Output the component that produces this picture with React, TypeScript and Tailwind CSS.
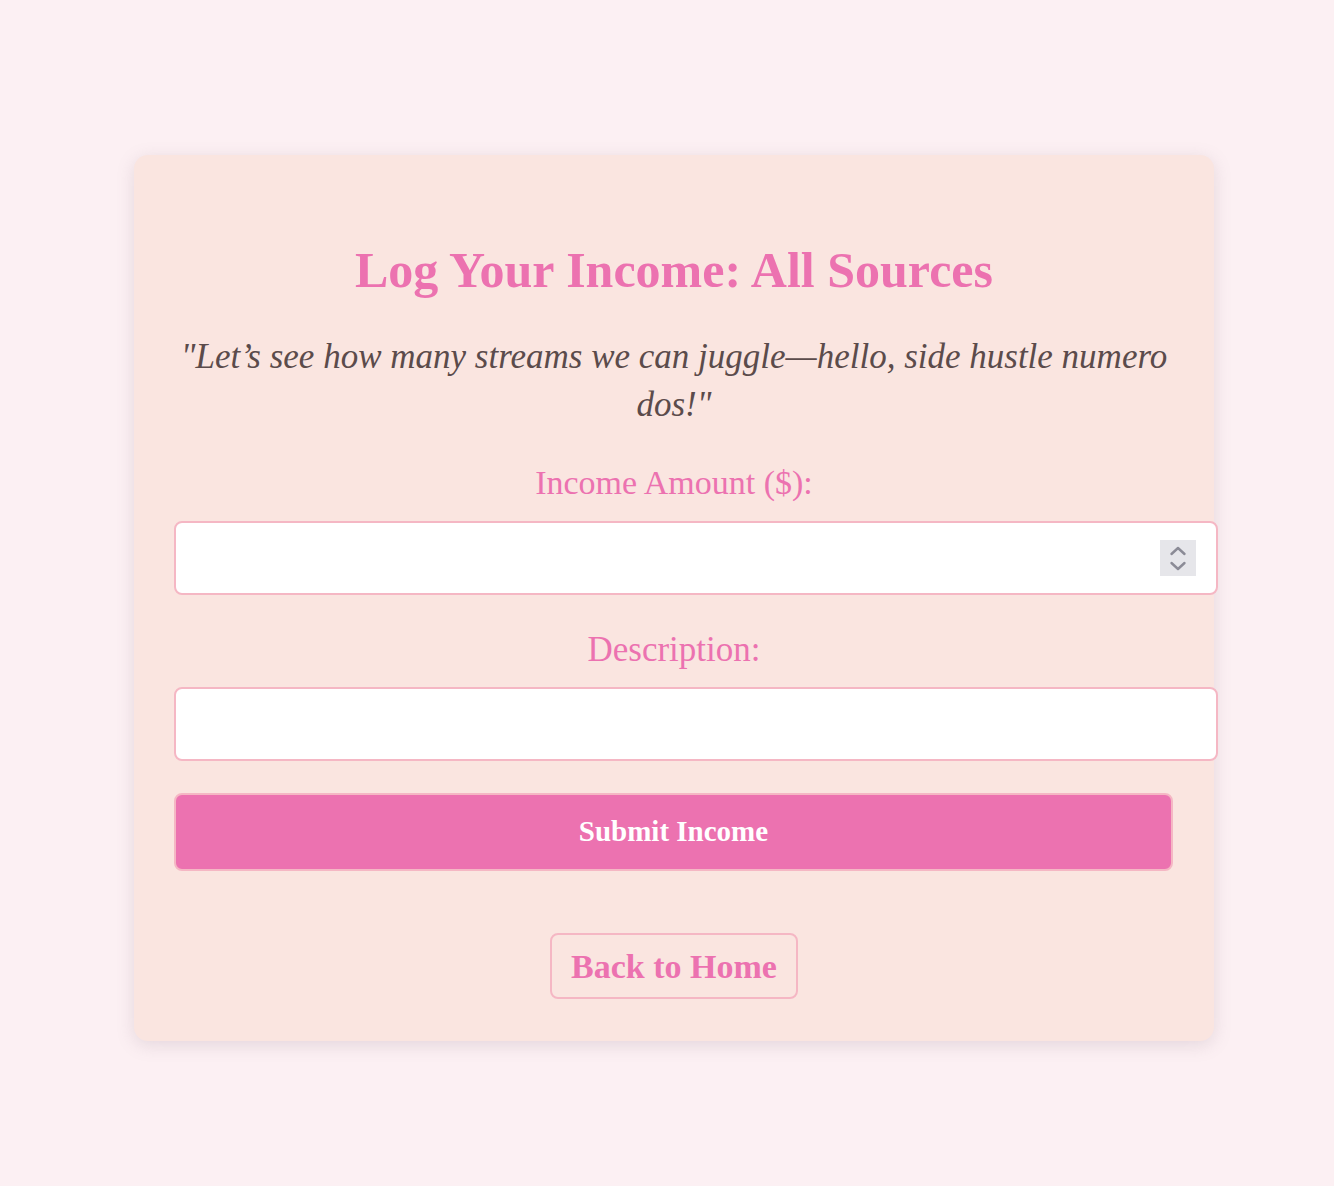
export default function App() {
  const serif = "font-['Liberation_Serif','DejaVu_Serif',serif]";

  return (
    <div className={`min-h-screen bg-[#fcf0f3] pt-[155px] pb-[146px] pl-[134px] ${serif}`}>
      <div className="w-[1080px] rounded-[14px] bg-[#fae5e0] px-10 pt-[46px] pb-[42px] shadow-[0_4px_18px_rgba(120,100,120,0.18)]">
        <form className="flex flex-col" onSubmit={(e) => e.preventDefault()}>
          <h1 className="mt-10 text-center text-[50px] font-bold leading-[58px] text-[#ec72b0]">
            Log Your Income: All Sources
          </h1>
          <p className="mt-[34px] text-center text-[35px] italic leading-[48px] text-[#5b4b4b]">
            "Let’s see how many streams we can juggle—hello, side hustle numero dos!"
          </p>

          <label htmlFor="amount" className="mt-[31px] text-center text-[34px] leading-[45px] text-[#ec72b0]">
            Income Amount ($):
          </label>
          <div className="relative mt-4">
            <input
              id="amount"
              type="number"
              className="box-content h-[70px] w-full rounded-lg border-2 border-[#f5b7c4] bg-white px-5 text-2xl outline-none [appearance:textfield] [&::-webkit-inner-spin-button]:appearance-none"
            />
            {/* spinner drawn on top, headless chrome hides the native one */}
            <svg
              className="pointer-events-none absolute top-[19px] right-[-22px]"
              width="36"
              height="36"
              viewBox="0 0 36 36"
            >
              <rect width="36" height="36" fill="#e6e6ea" />
              <path d="M11.5 14 L18 8 L24.5 14" fill="none" stroke="#8b8b96" strokeWidth="2.4" strokeLinecap="round" strokeLinejoin="round" />
              <path d="M11.5 23 L18 29 L24.5 23" fill="none" stroke="#8b8b96" strokeWidth="2.4" strokeLinecap="round" strokeLinejoin="round" />
            </svg>
          </div>

          <label htmlFor="desc" className="mt-8 text-center text-[35px] leading-[45px] text-[#ec72b0]">
            Description:
          </label>
          <input
            id="desc"
            type="text"
            className="mt-[15px] box-content h-[70px] w-full rounded-lg border-2 border-[#f5b7c4] bg-white px-5 text-2xl outline-none"
          />

          <button
            type="submit"
            className="mt-8 h-[78px] w-[999px] rounded-lg border-2 border-[#f5b7c4] bg-[#ec72b0] text-[29px] font-bold text-white"
          >
            Submit Income
          </button>
        </form>

        <div className="mt-[62px] flex justify-center">
          <a
            href="#"
            className="flex h-[66px] items-center rounded-lg border-2 border-[#f5b7c4] px-[19px] text-[34px] font-bold text-[#ec72b0]"
          >
            Back to Home
          </a>
        </div>
      </div>
    </div>
  );
}
